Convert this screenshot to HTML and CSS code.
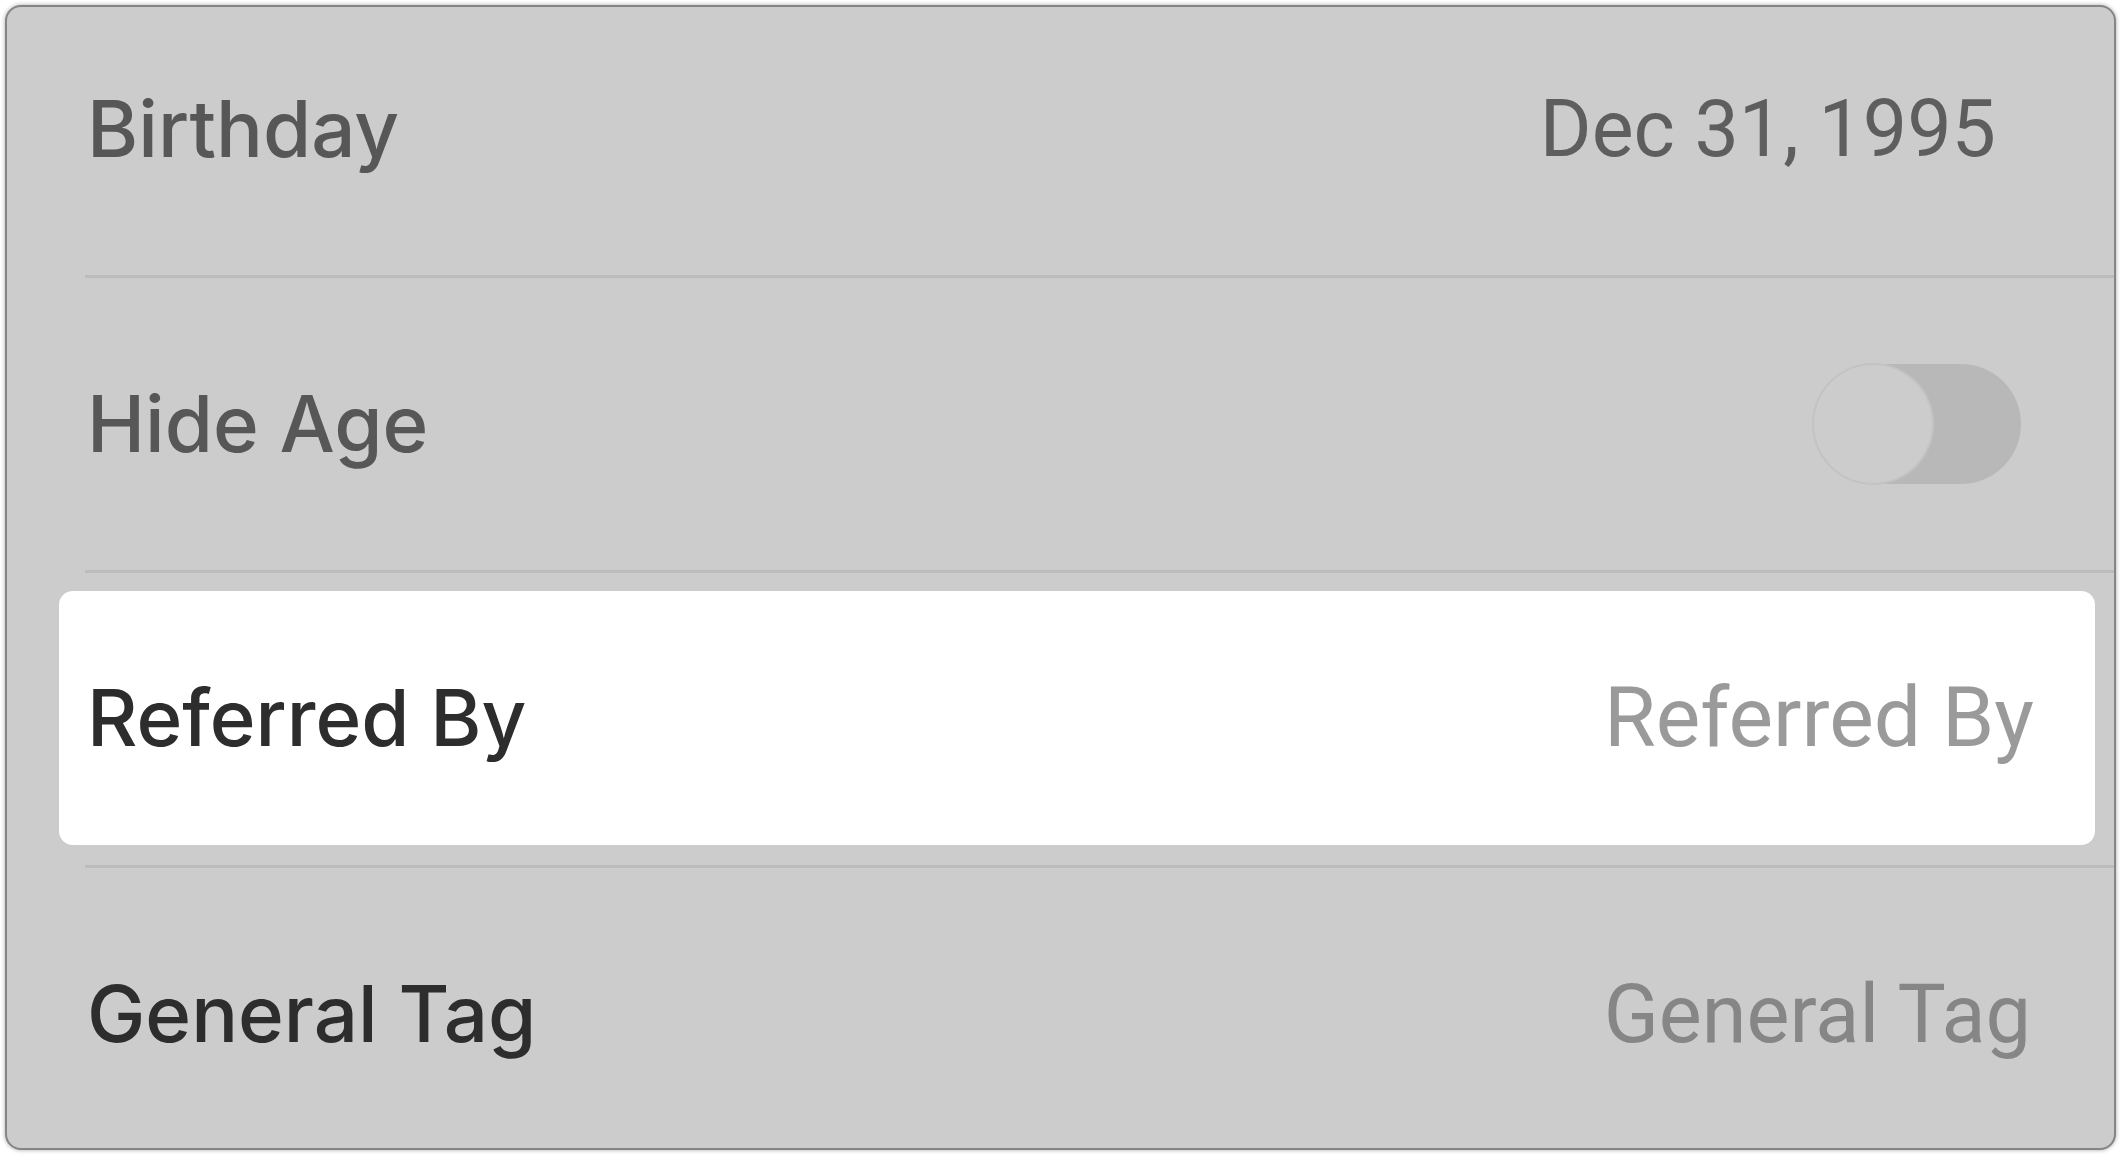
FILE: index.html
```html
<!DOCTYPE html>
<html lang="en">
<head>
<meta charset="utf-8">
<title>Profile fields</title>
<link rel="stylesheet" href="styles.css">
</head>
<body>
<div class="panel">
  <div class="list">
    <div class="row">
      <span class="label muted">Birthday</span>
      <span class="value date">Dec 31, 1995</span>
    </div>
    <div class="sep"></div>
    <div class="row">
      <span class="label muted">Hide Age</span>
      <span class="toggle"><span class="knob"></span></span>
    </div>
    <div class="sep"></div>
    <div class="row row-focus">
      <div class="field">
        <span class="label dark">Referred By</span>
        <span class="value placeholder">Referred By</span>
      </div>
    </div>
    <div class="sep"></div>
    <div class="row">
      <span class="label dark">General Tag</span>
      <span class="value tag">General Tag</span>
    </div>
  </div>
</div>
</body>
</html>
```
FILE: styles.css
```css
*, *::before, *::after {
  box-sizing: border-box;
}
html, body {
  margin: 0;
  padding: 0;
  background: #ffffff;
}
body {
  width: 2123px;
  height: 1157px;
  overflow: hidden;
}
.panel {
  margin: 5px 0 0 5px;
  width: 2111px;
  height: 1145px;
  border: 2px solid #858585;
  border-radius: 16px;
  background: #cccccc;
  box-shadow: 0 0 4px rgba(0,0,0,0.35);
  overflow: hidden;
}
.list {
  margin-top: -24px;
  display: flex;
  flex-direction: column;
}
.row {
  height: 292px;
  flex: none;
  display: flex;
  align-items: center;
  justify-content: space-between;
  padding: 0 0 0 80px;
}
.sep {
  height: 3px;
  flex: none;
  margin-left: 78px;
  background: #bcbcbc;
}
.label {
  font-family: "Inter", "Liberation Sans", sans-serif;
  font-size: 78px;
  font-weight: 500;
  line-height: 1;
}
.label.muted { color: #575757; }
.label.dark { color: #2d2d2d; }
.label.wide { letter-spacing: 1px; }
.value {
  font-family: "Roboto", "Liberation Sans", sans-serif;
  font-weight: 400;
  line-height: 1;
}
.date {
  font-size: 79px;
  color: #5e5e5e;
  margin-right: 118px;
}
.tag {
  font-size: 81px;
  color: #868686;
  margin-right: 83px;
}
.placeholder {
  font-size: 84px;
  color: #9a9a9a;
  margin-right: 61px;
}
.toggle {
  width: 208px;
  height: 120px;
  border-radius: 60px;
  background: #b8b8b8;
  margin-right: 93px;
  display: flex;
  align-items: center;
}
.knob {
  width: 118px;
  height: 118px;
  margin-left: 1px;
  border-radius: 50%;
  background: #cccccc;
  box-shadow: 0 0 0 2px #c3c3c3;
}
.row-focus {
  padding: 18px 19px 20px 52px;
  align-items: stretch;
}
.field {
  flex: 1;
  background: #ffffff;
  border-radius: 14px;
  display: flex;
  align-items: center;
  justify-content: space-between;
  padding-left: 28px;
}
```
